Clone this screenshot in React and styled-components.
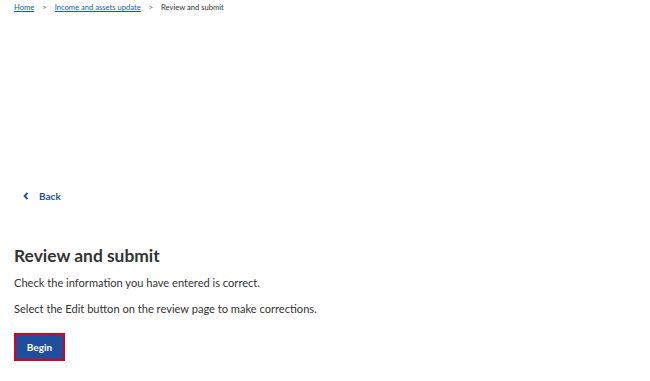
import { createGlobalStyle, styled } from "styled-components";

const GlobalStyle = createGlobalStyle`
  body {
    margin: 0;
    background: #ffffff;
    font-family: Lato, "Open Sans", sans-serif;
    color: #333333;
  }
`;

const Page = styled.div`
  padding: 0 14px;
`;

const Breadcrumbs = styled.nav`
  display: flex;
  align-items: center;
  gap: 8px;
  height: 14px;
  font-size: 7.6px;
  color: #333333;
`;

const Crumb = styled.a`
  color: #0b5cc7;
  text-decoration: underline;
`;

const Sep = styled.span`
  color: #555555;
`;

const BackLink = styled.a`
  display: flex;
  align-items: center;
  gap: 10px;
  margin-top: 174px;
  padding-left: 9px;
  height: 15px;
  font-size: 10px;
  font-weight: 700;
  color: #1f4e9c;
  text-decoration: none;
`;

const Heading = styled.h1`
  margin: 41px 0 0;
  font-size: 17.4px;
  font-weight: 700;
  line-height: 24px;
  color: #333333;
`;

const Text = styled.p`
  margin: ${(p) => p.$top}px 0 0;
  font-size: 11.1px;
  line-height: 16px;
  color: #333333;
`;

const BeginButton = styled.button`
  margin-top: 16px;
  width: 51px;
  height: 28px;
  background: #1f4e9c;
  border: 2px solid #e0001b;
  color: #ffffff;
  font-family: inherit;
  font-size: 10px;
  font-weight: 700;
  cursor: pointer;
`;

function App() {
  return (
    <>
      <GlobalStyle />
      <Page>
        <Breadcrumbs>
          <Crumb href="#">Home</Crumb>
          <Sep>&gt;</Sep>
          <Crumb href="#">Income and assets update</Crumb>
          <Sep>&gt;</Sep>
          <span>Review and submit</span>
        </Breadcrumbs>
        <BackLink href="#">
          <svg width="6" height="8" viewBox="0 0 6 8">
            <path d="M4.5 1 L1.5 4 L4.5 7" fill="none" stroke="#1f4e9c" strokeWidth="1.8" />
          </svg>
          Back
        </BackLink>
        <Heading>Review and submit</Heading>
        <Text $top={7}>Check the information you have entered is correct.</Text>
        <Text $top={10}>Select the Edit button on the review page to make corrections.</Text>
        <BeginButton>Begin</BeginButton>
      </Page>
    </>
  );
}

export default App;
